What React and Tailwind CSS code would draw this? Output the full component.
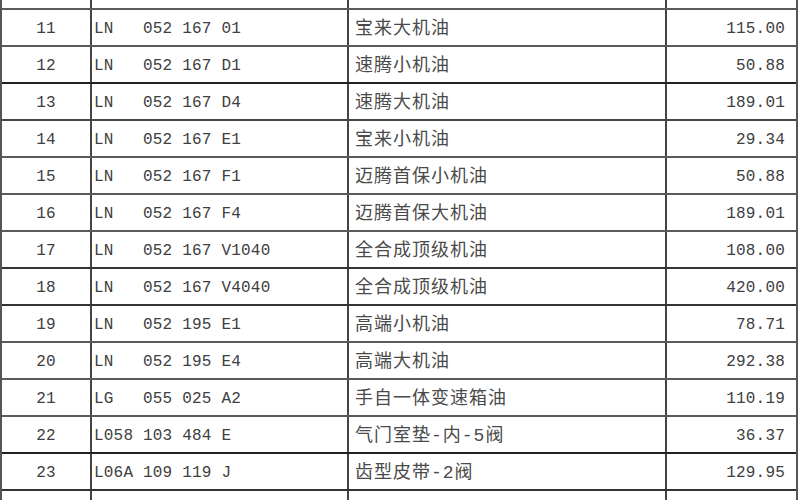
const rows = [
  { n: 11, code: 'LN   052 167 01', name: '宝来大机油', price: '115.00', line: 'border-[#5a5a5a]' },
  { n: 12, code: 'LN   052 167 D1', name: '速腾小机油', price: '50.88', line: 'border-[#222]' },
  { n: 13, code: 'LN   052 167 D4', name: '速腾大机油', price: '189.01', line: 'border-[#444]' },
  { n: 14, code: 'LN   052 167 E1', name: '宝来小机油', price: '29.34', line: 'border-[#5a5a5a]' },
  { n: 15, code: 'LN   052 167 F1', name: '迈腾首保小机油', price: '50.88', line: 'border-[#5a5a5a]' },
  { n: 16, code: 'LN   052 167 F4', name: '迈腾首保大机油', price: '189.01', line: 'border-[#5a5a5a]' },
  { n: 17, code: 'LN   052 167 V1040', name: '全合成顶级机油', price: '108.00', line: 'border-[#333]' },
  { n: 18, code: 'LN   052 167 V4040', name: '全合成顶级机油', price: '420.00', line: 'border-[#333]' },
  { n: 19, code: 'LN   052 195 E1', name: '高端小机油', price: '78.71', line: 'border-[#5a5a5a]' },
  { n: 20, code: 'LN   052 195 E4', name: '高端大机油', price: '292.38', line: 'border-[#5a5a5a]' },
  { n: 21, code: 'LG   055 025 A2', name: '手自一体变速箱油', price: '110.19', line: 'border-[#5a5a5a]' },
  { n: 22, code: 'L058 103 484 E', name: '气门室垫-内-5阀', price: '36.37', line: 'border-[#222]' },
  { n: 23, code: 'L06A 109 119 J', name: '齿型皮带-2阀', price: '129.95', line: 'border-[#333]' },
]

const mono = { fontFamily: '"Liberation Mono", "Noto Sans CJK SC", monospace' }

function Cells({ r }) {
  return (
    <>
      <div className="w-[90px] shrink-0 border-r-2 border-[#444] flex items-center justify-center pt-[3px]">{r?.n}</div>
      <div className="w-[257px] shrink-0 border-r-2 border-[#444] flex items-center pl-[2px] pt-[3px] whitespace-pre">{r?.code}</div>
      <div className="w-[318px] shrink-0 border-r-2 border-[#444] flex items-center pl-[6px] pt-[3px] text-[18px] tracking-[1px] text-[#4a4a4a]">{r?.name}</div>
      <div className="flex-1 flex items-center justify-end pr-[11px] pt-[3px]">{r?.price}</div>
    </>
  )
}

export default function App() {
  return (
    <div className="w-[800px] h-[500px] overflow-hidden bg-white">
      <div className="w-[798px] border-x-2 border-[#555] text-[16px] text-[#404040] tracking-[0.2px]" style={mono}>
        <div className="h-[10px] flex border-b-2 border-[#5a5a5a]">
          <Cells />
        </div>
        {rows.map((r) => (
          <div key={r.n} className={`h-[37px] flex border-b-2 ${r.line}`}>
            <Cells r={r} />
          </div>
        ))}
        <div className="h-[20px] flex">
          <Cells />
        </div>
      </div>
    </div>
  )
}
